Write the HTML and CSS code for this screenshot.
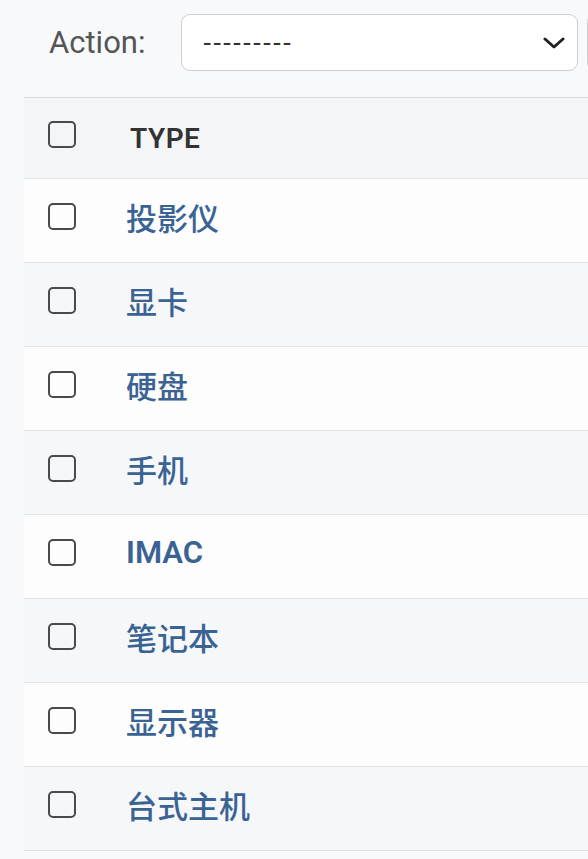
FILE: index.html
```html
<!DOCTYPE html>
<html lang="zh-CN">
<head>
<meta charset="utf-8">
<title>Select type to change</title>
<link rel="stylesheet" href="styles.css">
</head>
<body>
<div class="page">
  <div class="actions">
    <label class="action-label">Action:</label>
    <div class="select">
      <span class="select-value">---------</span>
      <svg class="chevron" width="22" height="12" viewBox="0 0 22 12" aria-hidden="true">
        <path d="M2 2 L11 10 L20 2" fill="none" stroke="#222" stroke-width="3" stroke-linecap="round" stroke-linejoin="round"/>
      </svg>
    </div>
    <button class="go" type="button" aria-label="Go"></button>
  </div>
  <div class="results">
    <table>
      <thead>
        <tr>
          <th class="check-col"><span class="cb cb-head"></span></th>
          <th class="type-col">TYPE</th>
        </tr>
      </thead>
      <tbody>
        <tr><td class="check-col"><span class="cb"></span></td><td class="name-col"><a class="link" href="#">投影仪</a></td></tr>
        <tr><td class="check-col"><span class="cb"></span></td><td class="name-col"><a class="link" href="#">显卡</a></td></tr>
        <tr><td class="check-col"><span class="cb"></span></td><td class="name-col"><a class="link" href="#">硬盘</a></td></tr>
        <tr><td class="check-col"><span class="cb"></span></td><td class="name-col"><a class="link" href="#">手机</a></td></tr>
        <tr><td class="check-col"><span class="cb"></span></td><td class="name-col"><a class="link latin" href="#">IMAC</a></td></tr>
        <tr><td class="check-col"><span class="cb"></span></td><td class="name-col"><a class="link" href="#">笔记本</a></td></tr>
        <tr><td class="check-col"><span class="cb"></span></td><td class="name-col"><a class="link" href="#">显示器</a></td></tr>
        <tr><td class="check-col"><span class="cb"></span></td><td class="name-col"><a class="link" href="#">台式主机</a></td></tr>
      </tbody>
    </table>
  </div>
</div>
</body>
</html>
```

FILE: styles.css
```css
html, body {
  margin: 0;
  padding: 0;
  overflow: hidden;
  background: #f8f9fb;
}

body {
  font-family: Roboto, "Noto Sans CJK SC", sans-serif;
  color: #333;
}

.page {
  width: 588px;
}

.actions {
  display: flex;
  align-items: center;
  height: 97px;
  box-sizing: border-box;
  padding: 0 0 12px 49px;
  white-space: nowrap;
}

.action-label {
  font-size: 31px;
  color: #555;
  margin-right: 36px;
  flex: none;
}

.select {
  flex: none;
  width: 397px;
  height: 57px;
  box-sizing: border-box;
  border: 1px solid #cfd0d4;
  border-radius: 9px;
  background: #fff;
  display: flex;
  align-items: center;
  justify-content: space-between;
  padding: 0 12px 0 21px;
}

.select-value {
  font-size: 27px;
  letter-spacing: 2.5px;
  color: #333;
}

.chevron {
  display: block;
}

.go {
  flex: none;
  margin-left: 9px;
  width: 80px;
  height: 57px;
  border: 1px solid #cfd0d4;
  border-radius: 8px;
  background: #f4f5f7;
  padding: 0;
}

.results {
  margin-left: 24px;
}

table {
  border-collapse: collapse;
  width: 564px;
}

thead th {
  height: 80px;
  padding: 0;
  background: #f4f5f7;
  border-top: 1px solid #d9dadd;
  border-bottom: 1px solid #e3e4e7;
  vertical-align: middle;
  text-align: left;
}

.check-col {
  width: 78px;
  padding-left: 24px !important;
}

.type-col {
  padding-left: 4px !important;
  font-size: 28px;
  font-weight: 600;
  color: #333;
  letter-spacing: 0.5px;
}

tbody td {
  height: 83px;
  padding: 0;
  border-bottom: 1px solid #e3e4e7;
  vertical-align: middle;
  background: #fdfdfe;
}

tbody td.name-col {
  padding-bottom: 8px;
  box-sizing: border-box;
}

tbody tr:nth-child(even) td {
  background: #f6f7f9;
}

.cb {
  display: block;
  width: 28px;
  height: 27px;
  box-sizing: border-box;
  border: 2px solid #4a4a4a;
  border-radius: 5px;
  background: transparent;
  margin-bottom: 9px;
}

.cb-head {
  margin-bottom: 7px;
}

.link {
  color: #3a6394;
  font-size: 31px;
  font-weight: 500;
  text-decoration: none;
}

.link.latin {
  font-weight: 600;
}
```
